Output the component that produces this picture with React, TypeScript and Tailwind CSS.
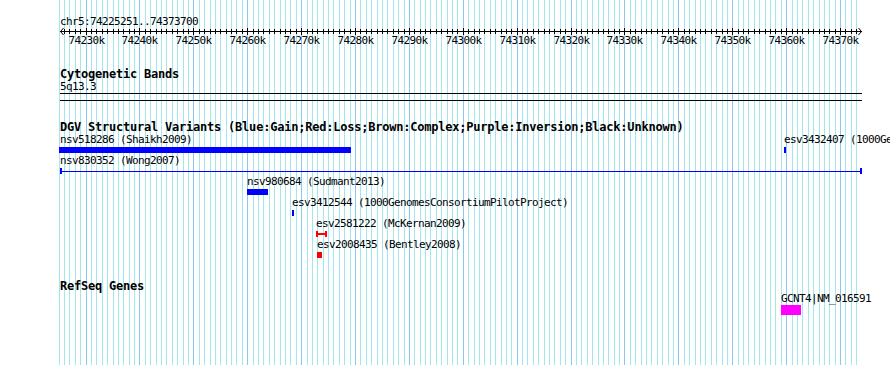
import React from "react";

const START = 74225251;
const END = 74373700;
const X0 = 60;
const WIDTH = 800;

// genomic position -> pixel column
function px(pos: number) {
  return Math.round(X0 + ((pos - START) / (END - START)) * WIDTH);
}

const kbs: number[] = [];
for (let k = 74225; k <= 74373; k++) kbs.push(k);

function Grid() {
  return (
    <svg className="absolute inset-0" width={890} height={365}>
      {kbs.map((k) => (
        <rect
          key={k}
          x={px(k * 1000)}
          y={0}
          width={1}
          height={365}
          fill={k % 10 === 0 ? "#8ac8f0" : "#a4e6ee"}
        />
      ))}
    </svg>
  );
}

function Ruler() {
  const left = X0;
  const right = X0 + WIDTH + 1;
  return (
    <div className="relative h-[22px]">
      <svg className="absolute inset-0" width={890} height={22}>
        <rect x={left} y={5} width={right - left + 1} height={1} fill="#000" />
        <path
          d={`M${left + 3.5} 2 L${left + 0.5} 5.5 L${left + 3.5} 9 M${right - 2.5} 2 L${right + 0.5} 5.5 L${right - 2.5} 9`}
          stroke="#000"
          strokeWidth={1}
          fill="none"
        />
        {kbs
          .filter((k) => k * 1000 > START && k * 1000 < END)
          .map((k) => (
            <rect
              key={k}
              x={px(k * 1000)}
              y={k % 10 === 0 ? 2 : 3}
              width={1}
              height={k % 10 === 0 ? 7 : 5}
              fill="#000"
            />
          ))}
      </svg>
      {kbs
        .filter((k) => k % 10 === 0)
        .map((k) => (
          <span
            key={k}
            className="absolute top-[8px] -translate-x-1/2 whitespace-nowrap"
            style={{ left: px(k * 1000) + 0.5 }}
          >
            {k}k
          </span>
        ))}
    </div>
  );
}

function TrackTitle({ children }: { children: React.ReactNode }) {
  return (
    <div className="pl-[60px] text-[12px] font-bold leading-[13px] tracking-[-0.22px] whitespace-nowrap">
      {children}
    </div>
  );
}

type Variant = {
  id: string;
  start: number;
  end: number;
  label: string;
  kind: "bar" | "span" | "bracket" | "box";
  color: string;
};

// one entry per row as GBrowse packed them
const dgvRows: Variant[][] = [
  [
    { id: "nsv518286", start: 59, end: 351, label: "nsv518286 (Shaikh2009)", kind: "bar", color: "#0000ff" },
    { id: "esv3432407", start: 784, end: 786, label: "esv3432407 (1000GenomesConsortiumPilotProject)", kind: "bar", color: "#0000ff" },
  ],
  [{ id: "nsv830352", start: 60, end: 862, label: "nsv830352 (Wong2007)", kind: "span", color: "#0000ff" }],
  [{ id: "nsv980684", start: 247, end: 268, label: "nsv980684 (Sudmant2013)", kind: "bar", color: "#0000ff" }],
  [{ id: "esv3412544", start: 292, end: 294, label: "esv3412544 (1000GenomesConsortiumPilotProject)", kind: "bar", color: "#0000ff" }],
  [{ id: "esv2581222", start: 316, end: 327, label: "esv2581222 (McKernan2009)", kind: "bracket", color: "#ff0000" }],
  [{ id: "esv2008435", start: 317, end: 322, label: "esv2008435 (Bentley2008)", kind: "box", color: "#ff0000" }],
];

function Glyph({ v }: { v: Variant }) {
  const w = v.end - v.start;
  if (v.kind === "span" || v.kind === "bracket") {
    const c = v.kind === "span" ? "bg-[#0000ff]" : "bg-[#ff0000]";
    return (
      <div className="flex h-[6px] items-center" style={{ width: w }}>
        <div className={`h-full w-[2px] shrink-0 ${c}`} />
        <div className={`flex-1 ${c} ${v.kind === "span" ? "h-px" : "h-[2px]"}`} />
        <div className={`h-full w-[2px] shrink-0 ${c}`} />
      </div>
    );
  }
  return <div className="h-[6px]" style={{ width: w, background: v.color }} />;
}

function DgvTrack() {
  return (
    <div className="flex flex-col">
      {dgvRows.map((row, i) => (
        <div key={i} className="relative h-[21px]">
          {row.map((v) => (
            <div
              key={v.id}
              className="absolute top-0 flex flex-col gap-px"
              style={{ left: v.start }}
            >
              <span className={`whitespace-nowrap ${v.start < 60 ? "pl-px" : ""}`}>{v.label}</span>
              <Glyph v={v} />
            </div>
          ))}
        </div>
      ))}
    </div>
  );
}

export default function App() {
  return (
    <div className="relative h-[365px] w-[890px] overflow-hidden bg-white font-['DejaVu_Sans_Mono',monospace] text-[11px] leading-[13px] tracking-[-0.62px] text-black">
      <Grid />
      <div className="relative flex flex-col">
        <div className="pl-[60px] pt-[15px]">chr5:74225251..74373700</div>
        <div className="mt-[-2px]">
          <Ruler />
        </div>

        <div className="mt-[20px]">
          <TrackTitle>Cytogenetic Bands</TrackTitle>
        </div>
        <div className="mt-[-1px] pl-[60px]">5q13.3</div>
        <div className="ml-[60px] h-[8px] w-[802px] border-y border-black" />

        <div className="mt-[20px]">
          <TrackTitle>DGV Structural Variants (Blue:Gain;Red:Loss;Brown:Complex;Purple:Inversion;Black:Unknown)</TrackTitle>
        </div>
        <div className="mt-[-1px]">
          <DgvTrack />
        </div>

        <div className="mt-[21px]">
          <TrackTitle>RefSeq Genes</TrackTitle>
        </div>
        <div className="mt-[-1px] flex flex-col items-start gap-0 pl-[781px]">
          <span className="whitespace-nowrap">GCNT4|NM_016591</span>
          <div className="h-[10px] w-[20px] bg-[#ff00ff]" />
        </div>
      </div>
    </div>
  );
}
